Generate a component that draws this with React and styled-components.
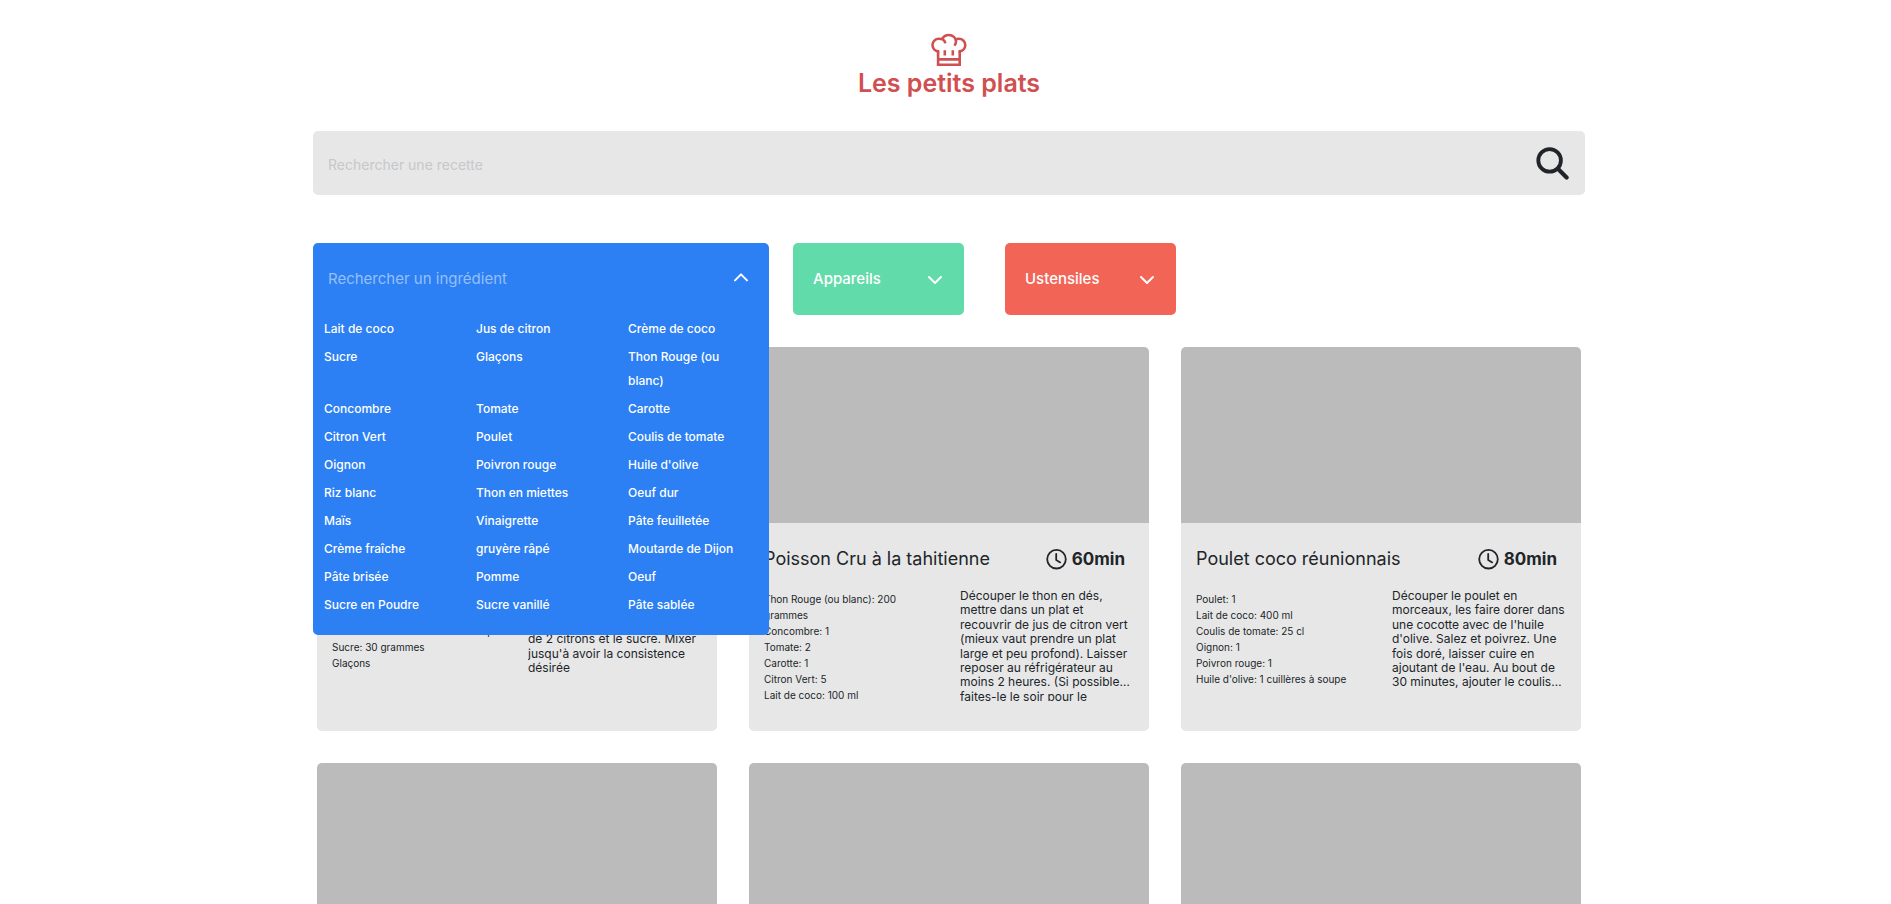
import React from "react";
import styled, { createGlobalStyle } from "styled-components";

const GlobalStyle = createGlobalStyle`
  *, *::before, *::after { box-sizing: border-box; }
  body {
    margin: 0;
    background: #fff;
    color: #212529;
    font-family: Inter, "Liberation Sans", sans-serif;
    font-size: 15px;
    line-height: 24px;
  }
  h1, h2, p, ul { margin: 0; padding: 0; }
  ul { list-style: none; }
  button, input { font: inherit; }
`;

const Page = styled.div`
  height: 100vh;
  overflow: hidden;
  padding-left: 7px;
`;

const Container = styled.div`
  max-width: 1272px;
  margin: 0 auto;
`;

const Header = styled.header`
  display: flex;
  flex-direction: column;
  align-items: center;
  padding-top: 33px;
  height: 131px;
  color: #d04f50;
`;

const Brand = styled.h1`
  font-size: 25px;
  line-height: 32px;
  font-weight: 600;
`;

const SearchBar = styled.form`
  display: flex;
  align-items: center;
  height: 64px;
  padding: 0 16px 0 15px;
  border-radius: 5px;
  background: #e7e7e7;
`;

const SearchInput = styled.input`
  flex: 1;
  min-width: 0;
  height: 100%;
  padding: 2px 0 0;
  border: 0;
  outline: 0;
  background: transparent;
  font-size: 14px;
  color: #212529;
  &::placeholder { color: #c6c8ca; opacity: 1; }
`;

const IconButton = styled.button`
  display: flex;
  padding: 0;
  border: 0;
  background: transparent;
  color: inherit;
  cursor: pointer;
`;

const Filters = styled.div`
  display: flex;
  margin-top: 48px;
`;

const OpenFilter = styled.div`
  position: relative;
  width: 456px;
  height: 72px;
  margin-right: 24px;
`;

const Panel = styled.div`
  position: absolute;
  top: 0;
  left: 0;
  z-index: 2;
  width: 100%;
  padding-bottom: 16px;
  border-radius: 5px;
  background: #2c80f4;
  color: #fff;
`;

const PanelHeader = styled.div`
  display: flex;
  align-items: center;
  height: 72px;
  padding: 0 20px 0 15px;
`;

const PanelInput = styled.input`
  flex: 1;
  min-width: 0;
  padding: 0;
  border: 0;
  outline: 0;
  background: transparent;
  color: #fff;
  &::placeholder { color: #95bff9; opacity: 1; }
`;

const Options = styled.ul`
  display: grid;
  grid-template-columns: repeat(3, 1fr);
`;

const Option = styled.li`
  padding: 2px 24px 2px 11px;
  font-size: 12px;
  font-weight: 500;
`;

const FilterSlot = styled.div`
  width: 212px;
`;

const FilterButton = styled.button`
  display: flex;
  align-items: center;
  justify-content: space-between;
  width: 171px;
  height: 72px;
  padding: 0 21px 0 20px;
  border: 0;
  border-radius: 5px;
  background: ${(p) => p.$color};
  color: #fff;
  font-weight: 500;
  cursor: pointer;
`;

const Recipes = styled.main`
  display: grid;
  grid-template-columns: repeat(3, 1fr);
  gap: 32px;
  padding: 32px 4px;
`;

const Card = styled.article`
  height: 384px;
  border-radius: 5px;
  overflow: hidden;
  background: #e7e7e7;
`;

const CardImage = styled.div`
  height: 176px;
  background: #bbbbbb;
`;

const CardBody = styled.div`
  padding: 24px 15px;
`;

const CardHeader = styled.div`
  display: flex;
  align-items: center;
  justify-content: space-between;
  padding-right: 9px;
  margin-bottom: 18px;
`;

const Title = styled.h2`
  font-size: 18px;
  line-height: 24px;
  font-weight: 400;
`;

const Duration = styled.span`
  display: flex;
  align-items: center;
  gap: 5px;
  font-size: 17px;
  font-weight: 700;
`;

const Details = styled.div`
  display: grid;
  grid-template-columns: 1fr 174px;
  gap: 24px;
`;

const Ingredients = styled.ul`
  padding-top: 2px;
  font-size: 10px;
  line-height: 16px;
`;

const Description = styled.p`
  display: -webkit-box;
  -webkit-box-orient: vertical;
  -webkit-line-clamp: 7;
  overflow: hidden;
  margin-bottom: 2px;
  font-size: 12px;
  line-height: 1.2;
`;

const HatIcon = () => (
  <svg width="36" height="34" viewBox="0 0 36 34" fill="none" stroke="currentColor" strokeWidth="2.6" aria-hidden="true">
    <path d="M7.1 18V31.7H28.7V18M7.1 26.4H28.7" />
    <path d="M8.2 18.4C4.2 18.4 1.5 15.6 1.5 12.1C1.5 8.5 4.3 5.8 7.8 5.8C11.4 5.8 14 7.6 14.3 10.4" />
    <path d="M11 6.4C12.2 3.6 14.6 2 17.9 2C21.8 2 25 4.8 25 8.4C25 9.9 24.6 11.2 23.4 12.6" />
    <path d="M24.4 6.2C25.6 5.8 26.6 5.7 27.8 5.7C31.5 5.7 34.3 8.5 34.3 12.1C34.3 15.6 31.6 18.4 27.6 18.4" />
    <path d="M13.8 17.2V22.4M21.8 17.2V22.4" />
  </svg>
);

const SearchIcon = () => (
  <svg width="33" height="33" viewBox="0 0 33 33" fill="none" stroke="currentColor" strokeLinecap="round" aria-hidden="true">
    <circle cx="13.6" cy="13.4" r="11.3" strokeWidth="3.8" />
    <path d="M22.4 22.2L30.6 30.4" strokeWidth="4.2" />
  </svg>
);

const Chevron = ({ up }) => (
  <svg width="16" height="16" viewBox="0 0 16 16" fill="none" stroke="currentColor" strokeWidth="2" strokeLinecap="round" strokeLinejoin="round" aria-hidden="true">
    <path d={up ? "M2 9.4L8 3.4L14 9.4" : "M2 6L8 12L14 6"} />
  </svg>
);

const ClockIcon = () => (
  <svg width="21" height="21" viewBox="0 0 21 21" fill="none" stroke="currentColor" strokeWidth="1.8" strokeLinecap="round" strokeLinejoin="round" aria-hidden="true">
    <circle cx="10.5" cy="10.2" r="9.3" />
    <path d="M10.2 5V11L14.2 13.4" />
  </svg>
);

const options = [
  "Lait de coco", "Jus de citron", "Crème de coco",
  "Sucre", "Glaçons", "Thon Rouge (ou blanc)",
  "Concombre", "Tomate", "Carotte",
  "Citron Vert", "Poulet", "Coulis de tomate",
  "Oignon", "Poivron rouge", "Huile d'olive",
  "Riz blanc", "Thon en miettes", "Oeuf dur",
  "Maïs", "Vinaigrette", "Pâte feuilletée",
  "Crème fraîche", "gruyère râpé", "Moutarde de Dijon",
  "Pâte brisée", "Pomme", "Oeuf",
  "Sucre en Poudre", "Sucre vanillé", "Pâte sablée",
];

const recipes = [
  {
    title: "Limonade de Coco",
    time: "10min",
    ingredients: ["Lait de coco: 400 ml", "Jus de citron: 2", "Crème de coco: 4 cuillères à soupe", "Sucre: 30 grammes", "Glaçons"],
    text: "Mettre les glaçons à votre goût dans le blender, ajouter le lait, la crème de coco, le jus de\u00a02\u00a0citrons et le sucre. Mixer jusqu'à avoir la consistence désirée",
  },
  {
    title: "Poisson Cru à la tahitienne",
    time: "60min",
    ingredients: ["Thon Rouge (ou blanc): 200 grammes", "Concombre: 1", "Tomate: 2", "Carotte: 1", "Citron Vert: 5", "Lait de coco: 100 ml"],
    text: "Découper le thon en dés, mettre dans un plat et recouvrir de jus de citron vert (mieux vaut prendre un plat large et peu profond). Laisser reposer au réfrigérateur au moins 2 heures. (Si possible faites-le le soir pour le lendemain).",
  },
  {
    title: "Poulet coco réunionnais",
    time: "80min",
    ingredients: ["Poulet: 1", "Lait de coco: 400 ml", "Coulis de tomate: 25 cl", "Oignon: 1", "Poivron rouge: 1", "Huile d'olive: 1 cuillères à soupe"],
    text: "Découper le poulet en morceaux, les faire dorer dans une cocotte avec de l'huile d'olive. Salez et poivrez. Une fois doré, laisser cuire en ajoutant de l'eau. Au bout de 30 minutes, ajouter le coulis de tomate.",
  },
];

const RecipeCard = ({ recipe }) => (
  <Card>
    <CardImage />
    <CardBody>
      <CardHeader>
        <Title>{recipe.title}</Title>
        <Duration><ClockIcon />{recipe.time}</Duration>
      </CardHeader>
      <Details>
        <Ingredients>
          {recipe.ingredients.map((item) => <li key={item}>{item}</li>)}
        </Ingredients>
        <Description>{recipe.text}</Description>
      </Details>
    </CardBody>
  </Card>
);

export default function App() {
  return (
    <Page>
      <GlobalStyle />
      <Container>
        <Header>
          <HatIcon />
          <Brand>Les petits plats</Brand>
        </Header>
        <SearchBar role="search" onSubmit={(e) => e.preventDefault()}>
          <SearchInput type="text" aria-label="Rechercher une recette" placeholder="Rechercher une recette" />
          <IconButton type="submit" aria-label="Rechercher"><SearchIcon /></IconButton>
        </SearchBar>
        <Filters>
          <OpenFilter>
            <Panel>
              <PanelHeader>
                <PanelInput type="text" aria-label="Rechercher un ingrédient" placeholder="Rechercher un ingrédient" />
                <IconButton type="button" aria-label="Fermer" aria-expanded="true"><Chevron up /></IconButton>
              </PanelHeader>
              <Options>
                {options.map((name) => <Option key={name}>{name}</Option>)}
              </Options>
            </Panel>
          </OpenFilter>
          <FilterSlot>
            <FilterButton type="button" $color="#62dbaa">Appareils<Chevron /></FilterButton>
          </FilterSlot>
          <FilterSlot>
            <FilterButton type="button" $color="#f26455">Ustensiles<Chevron /></FilterButton>
          </FilterSlot>
        </Filters>
        <Recipes>
          {recipes.map((recipe) => <RecipeCard key={recipe.title} recipe={recipe} />)}
          <Card><CardImage /></Card>
          <Card><CardImage /></Card>
          <Card><CardImage /></Card>
        </Recipes>
      </Container>
    </Page>
  );
}
